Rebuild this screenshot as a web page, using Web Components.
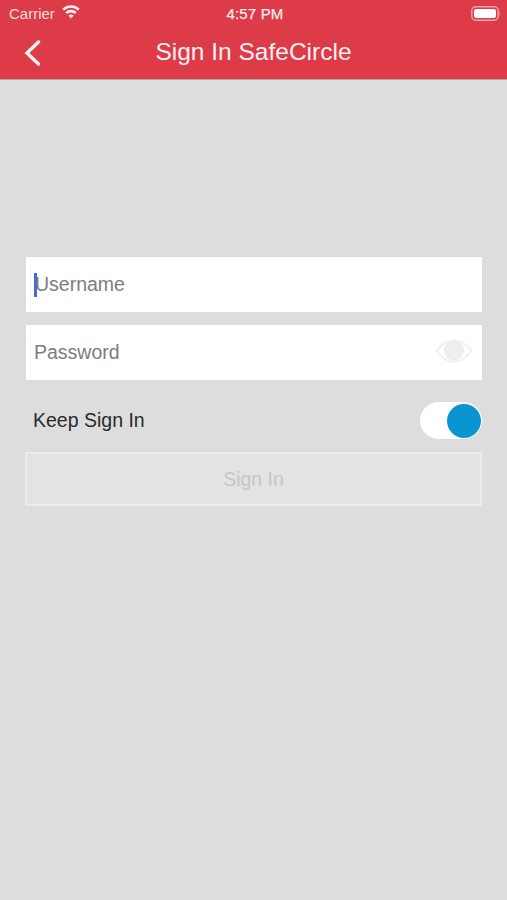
<!DOCTYPE html>
<html>
<head>
<meta charset="utf-8">
<style>
  html, body { margin: 0; height: 100%; background: #dddddd; }
  body { font-family: "Liberation Sans", Arial, sans-serif; }
</style>
</head>
<body>
<signin-screen>
  <app-header title="Sign In SafeCircle"></app-header>
  <signin-form></signin-form>
</signin-screen>

<script>
class SigninScreen extends HTMLElement {
  constructor() {
    super()
    this.attachShadow({ mode: "open" })
    this.shadowRoot.innerHTML = `
      <style>
        :host {
          display: flex;
          flex-direction: column;
          height: 900px;
          overflow: hidden;
          background: #dddddd;
        }
      </style>
      <slot></slot>
    `
  }
}

class AppHeader extends HTMLElement {
  constructor() {
    super()
    this.attachShadow({ mode: "open" })
  }

  connectedCallback() {
    this.shadowRoot.innerHTML = `
      <style>
        :host {
          display: block;
          background: #dc3b47;
          color: #fff;
          border-bottom: 1px solid #b9a3a5;
        }
        .status {
          height: 27px;
          display: grid;
          grid-template-columns: 1fr auto 1fr;
          align-items: center;
          padding: 0 6px 0 9px;
          font-size: 15px;
          color: #fbdfe1;
        }
        .left { display: flex; align-items: center; gap: 7px; }
        .time { font-size: 15px; letter-spacing: .15px; color: #fdeeef; -webkit-text-stroke: .25px #fdeeef; }
        .right { display: flex; justify-content: flex-end; }
        .nav {
          height: 52px;
          display: grid;
          grid-template-columns: 60px 1fr 60px;
          align-items: center;
        }
        .back { display: flex; padding-left: 24px; margin-bottom: 1px; }
        .title { text-align: center; font-size: 24.5px; color: #fdf0f1; margin-bottom: 2px; }
      </style>
      <div class="status">
        <div class="left">
          <span>Carrier</span>
          <svg width="18" height="15" viewBox="0 0 18 15" style="margin-top:-5px">
            <path d="M1.2 5.6 A11.4 11.4 0 0 1 16.8 5.6" fill="none" stroke="#fdeeef" stroke-width="2.6"/>
            <path d="M4.2 9 A7 7 0 0 1 13.8 9" fill="none" stroke="#fdeeef" stroke-width="2.6"/>
            <path d="M6.4 11.6 A3.8 3.8 0 0 1 11.6 11.6 L9 14.6 Z" fill="#fdeeef"/>
          </svg>
        </div>
        <span class="time">4:57 PM</span>
        <div class="right">
          <svg width="30" height="15" viewBox="0 0 30 15">
            <rect x="0.8" y="0.8" width="26.4" height="13.4" rx="4" fill="none" stroke="#f0a6ab" stroke-width="1.4"/>
            <rect x="3" y="3" width="22" height="9" rx="2.2" fill="#fff"/>
            <path d="M28.4 5.5 q1.6 2 0 4 Z" fill="#f0a6ab"/>
          </svg>
        </div>
      </div>
      <div class="nav">
        <div class="back">
          <svg width="18" height="26" viewBox="0 0 18 26">
            <path d="M14.5 2 L3 13 L14.5 24" fill="none" stroke="#fdf0f1" stroke-width="3.4" stroke-linecap="round"/>
          </svg>
        </div>
        <div class="title">${this.getAttribute("title")}</div>
        <div></div>
      </div>
    `
  }
}

class TextField extends HTMLElement {
  constructor() {
    super()
    this.attachShadow({ mode: "open" })
    this.shadowRoot.innerHTML = `
      <style>
        :host {
          display: flex;
          align-items: center;
          height: 55px;
          padding: 0 9px 0 8px;
          background: #fff;
          font-size: 19.5px;
          color: #7d7d7d;
        }
        .caret { display: none; width: 3px; height: 24px; background: #4a66dc; margin-right: -2px; }
        :host([focused]) .caret { display: block; }
        .text { flex: 1; }
        ::slotted(svg) { display: block; }
      </style>
      <span class="caret"></span>
      <span class="text"></span>
      <slot></slot>
    `
  }

  connectedCallback() {
    this.shadowRoot.querySelector(".text").textContent = this.getAttribute("placeholder")
  }
}

class ToggleSwitch extends HTMLElement {
  constructor() {
    super()
    this.attachShadow({ mode: "open" })
    this.shadowRoot.innerHTML = `
      <style>
        :host {
          display: flex;
          justify-content: flex-end;
          align-items: center;
          box-sizing: border-box;
          width: 62px;
          height: 37px;
          padding-right: 1px;
          border-radius: 19px;
          background: #fff;
        }
        .knob { width: 34px; height: 34px; border-radius: 50%; background: #0a94d2; }
      </style>
      <div class="knob"></div>
    `
  }
}

class SigninForm extends HTMLElement {
  constructor() {
    super()
    this.attachShadow({ mode: "open" })
    this.shadowRoot.innerHTML = `
      <style>
        :host {
          display: flex;
          flex-direction: column;
          padding: 177px 25px 0 26px;
        }
        .gap { height: 13px; }
        .keep {
          display: flex;
          justify-content: space-between;
          align-items: center;
          height: 37px;
          margin: 22px 0 13px;
          padding-left: 7px;
          font-size: 19.5px;
          color: #2a2a2a;
        }
        .submit {
          box-sizing: border-box;
          height: 54px;
          margin-left: -1px;
          display: flex;
          align-items: center;
          justify-content: center;
          background: #e3e3e3;
          border: 2px solid #ececec;
          color: #c6c6c6;
          font-size: 19.5px;
        }
      </style>
      <text-field placeholder="Username" focused></text-field>
      <div class="gap"></div>
      <text-field placeholder="Password">
        <svg width="38" height="24" viewBox="0 0 38 24" style="margin-top:-3px">
          <path d="M1.5 12 C8 3.5 14 1.2 19 1.2 C24 1.2 30 3.5 36.5 12 C30 20.5 24 22.8 19 22.8 C14 22.8 8 20.5 1.5 12 Z" fill="none" stroke="#f0f0f0" stroke-width="2"/>
          <circle cx="19" cy="11.5" r="10" fill="#eeeeee"/>
        </svg>
      </text-field>
      <div class="keep">
        <span>Keep Sign In</span>
        <toggle-switch></toggle-switch>
      </div>
      <div class="submit">Sign In</div>
    `
  }
}

customElements.define("signin-screen", SigninScreen)
customElements.define("app-header", AppHeader)
customElements.define("text-field", TextField)
customElements.define("toggle-switch", ToggleSwitch)
customElements.define("signin-form", SigninForm)
</script>
</body>
</html>
